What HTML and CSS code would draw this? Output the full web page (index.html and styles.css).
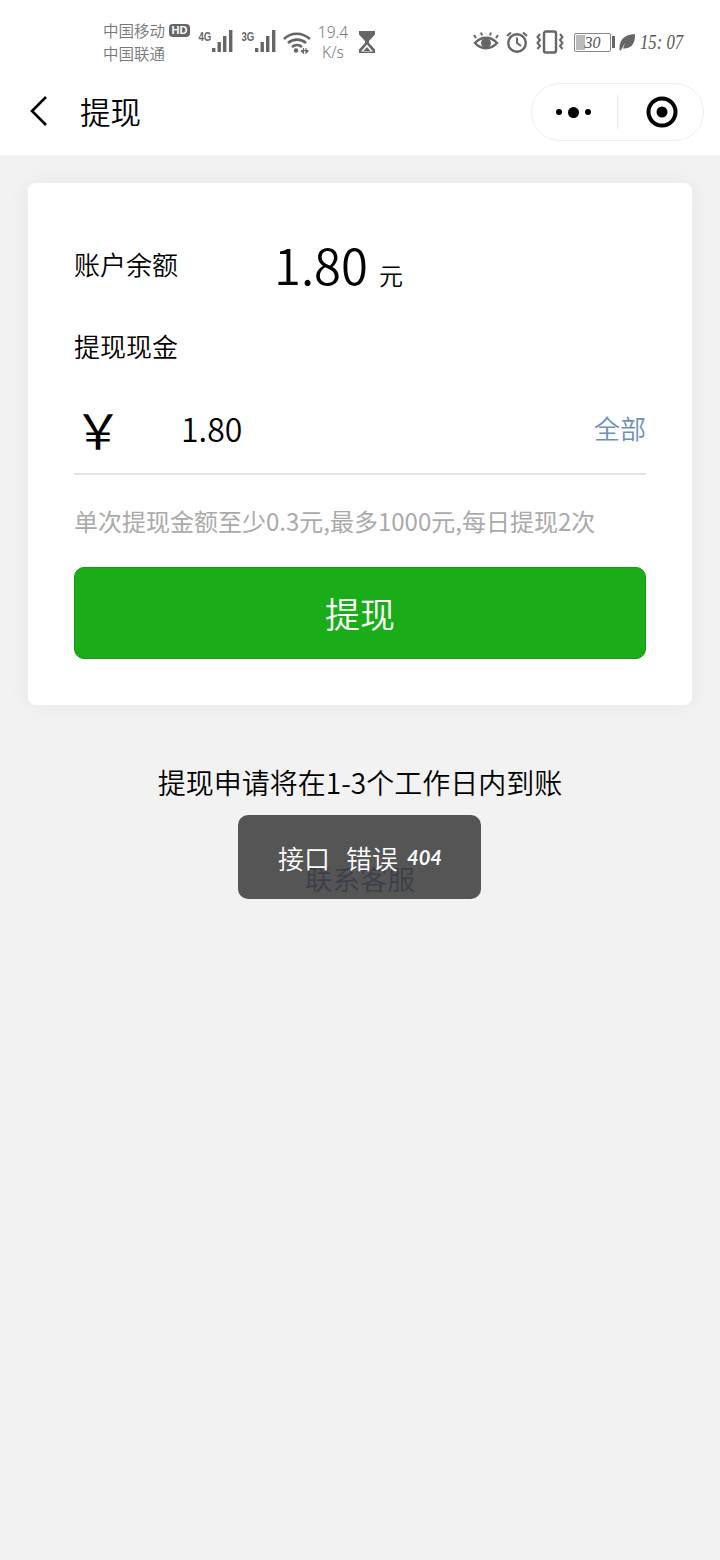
FILE: index.html
```html
<!DOCTYPE html>
<html lang="zh-CN">
<head>
<meta charset="utf-8">
<title>提现</title>
<link rel="stylesheet" href="styles.css">
</head>
<body>
<header class="top">
  <div class="status">
    <div class="carriers">
      <div class="carrier-line"><span>中国移动</span><span class="hd">HD</span></div>
      <div class="carrier-line"><span>中国联通</span></div>
    </div>
    <div class="signal">
      <span class="net">4G</span>
      <svg class="bars" viewBox="0 0 24 24" width="24" height="24"><rect x="1" y="18" width="3.400" height="4"/><rect x="6.500" y="12" width="3.400" height="10"/><rect x="12" y="6" width="3.400" height="16"/><rect x="18" y="0" width="3.400" height="22"/></svg>
    </div>
    <div class="signal">
      <span class="net">3G</span>
      <svg class="bars" viewBox="0 0 24 24" width="24" height="24"><rect x="1" y="18" width="3.400" height="4"/><rect x="6.500" y="12" width="3.400" height="10"/><rect x="12" y="6" width="3.400" height="16"/><rect x="18" y="0" width="3.400" height="22"/></svg>
    </div>
    <svg class="wifi" viewBox="0 0 30 24" width="30" height="24"><path d="M2 9C9 2 20 2 28 9M6 13c5-4.500 13-4.500 18 0M10 17c3-2.500 7-2.500 10 0" fill="none" stroke="#666" stroke-width="2.600"/><circle cx="14" cy="20.500" r="2.200" fill="#666"/><path d="M19 20.500h7M21.500 18v5l-2.500-2.500M24 18v5l2.500-2.500" fill="none" stroke="#666" stroke-width="1.200"/></svg>
    <div class="speed"><span>19.4</span><span>K/s</span></div>
    <svg class="glass" viewBox="0 0 20 24" width="20" height="24"><path d="M2 1h16v3.500l-6 6.500v2l6 6.500v3.500H2v-3.500l6-6.500v-2L2 4.500z" fill="#666"/><path d="M10 14.500l6 7H4z" fill="#fff"/><path d="M10 17l3.500 4h-7z" fill="#666"/></svg>
    <div class="status-right">
      <svg class="ico-eye" viewBox="0 0 26 24" width="26" height="24"><path d="M2 13c6-7 16-7 22 0-6 7-16 7-22 0z" fill="none" stroke="#666" stroke-width="2.400"/><circle cx="13" cy="13" r="5" fill="#666"/><path d="M3 8L1 5M9 5.500L8 2.500M17 5.500l1-3M23 8l2-3" stroke="#666" stroke-width="2" fill="none"/></svg>
      <svg class="ico-alarm" viewBox="0 0 24 24" width="24" height="24"><circle cx="12" cy="13" r="8.800" fill="none" stroke="#666" stroke-width="2.400"/><path d="M12 7.500V13l4 3M2 6l4-3.500M22 6l-4-3.500" fill="none" stroke="#666" stroke-width="2"/></svg>
      <svg class="ico-vib" viewBox="0 0 28 24" width="28" height="24"><rect x="8" y="1.500" width="12" height="21" rx="2" fill="none" stroke="#666" stroke-width="2.400"/><path d="M4 4l-2.500 3L4 10 1.500 13 4 16l-2.500 3M24 4l2.500 3L24 10l2.500 3L24 16l2.500 3" fill="none" stroke="#666" stroke-width="2"/></svg>
      <div class="battery-wrap">
        <div class="battery"><span class="battery-fill"></span><span class="battery-num">30</span></div>
        <span class="battery-cap"></span>
      </div>
      <svg class="ico-leaf" viewBox="0 0 18 20" width="18" height="20"><path d="M1.500 18C1 8 6 2.500 17 2c.5 10-4 15-12 14.500L7 11 2.800 18.500z" fill="#666"/></svg>
      <span class="clock">15: 07</span>
    </div>
  </div>
  <nav class="nav">
    <svg class="back" viewBox="0 0 20 32" width="20" height="32"><path d="M17 2L3 16l14 14" fill="none" stroke="#000" stroke-width="2.600"/></svg>
    <h1 class="title">提现</h1>
    <div class="capsule">
      <div class="dots"><i></i><i class="big"></i><i></i></div>
      <span class="sep"></span>
      <svg viewBox="0 0 32 32" width="32" height="32"><circle cx="16" cy="16" r="13.500" fill="none" stroke="#000" stroke-width="4"/><circle cx="16" cy="16" r="5.500" fill="#000"/></svg>
    </div>
  </nav>
</header>

<main class="page">
  <section class="card">
    <div class="balance">
      <span class="label">账户余额</span>
      <div class="money">
        <span class="amount">1.80</span>
        <span class="unit">元</span>
      </div>
    </div>
    <div class="label cash-label">提现现金</div>
    <div class="input-row">
      <span class="yen">￥</span>
      <span class="value">1.80</span>
      <span class="all">全部</span>
    </div>
    <p class="hint">单次提现金额至少0.3元,最多1000元,每日提现2次</p>
    <button class="submit" type="button">提现</button>
  </section>
  <p class="note">提现申请将在1-3个工作日内到账</p>
  <a class="service">联系客服</a>
</main>

<div class="toast"><span>接口</span><span>错误</span><em>404</em></div>
</body>
</html>
```

FILE: styles.css
```css
* { box-sizing: border-box; }
html, body { margin: 0; padding: 0; }
body {
  width: 720px;
  height: 1560px;
  overflow: hidden;
  position: relative;
  background: #f2f2f2;
  color: #000;
  font-family: "Noto Sans CJK SC", "Noto Sans", sans-serif;
  font-weight: 350;
}
.top { background: #fff; height: 155px; }
.status {
  height: 71px;
  padding: 13px 37px 0 103px;
  display: flex;
  align-items: center;
  color: #777;
}
.carriers { width: 94px; font-size: 15.500px; line-height: 23px; }
.carrier-line { display: flex; align-items: center; gap: 4px; height: 23px; }
.hd {
  background: #666;
  color: #fff;
  font-family: "Liberation Sans", sans-serif;
  font-size: 11px;
  font-weight: 700;
  line-height: 13px;
  height: 13px;
  width: 21px;
  text-align: center;
  border-radius: 4px;
}
.signal { display: flex; align-items: flex-start; width: 43px; }
.net {
  font-family: "Liberation Sans", sans-serif;
  font-size: 12px;
  font-weight: 700;
  color: #666;
  width: 15px;
  transform: scaleX(.8);
  line-height: 14px;
}
.bars { fill: #666; display: block; flex: none; margin-left: -1px; }
.wifi { margin-left: -1px; flex: none; }
.speed {
  width: 44px;
  display: flex;
  flex-direction: column;
  align-items: center;
  font-size: 15.500px;
  font-weight: 300;
  line-height: 20px;
  font-family: "Noto Sans", sans-serif;
  margin-left: -1px;
}
.glass { margin-left: 2px; flex: none; }
.status-right { margin-left: auto; display: flex; align-items: center; }
.ico-alarm { margin-left: 6px; }
.ico-vib { margin-left: 7px; }
.battery-wrap { display: flex; align-items: center; gap: 1px; margin-left: 10px; }
.battery {
  width: 37px;
  height: 19px;
  border: 1px solid #888;
  border-radius: 2px;
  position: relative;
  display: flex;
  align-items: center;
  justify-content: center;
}
.battery-fill { position: absolute; left: 1px; top: 1px; bottom: 1px; width: 9px; background: #bbb; }
.battery-num {
  position: relative;
  font-family: "Liberation Serif", serif;
  font-style: italic;
  font-size: 16px;
  line-height: 17px;
  color: #555;
}
.battery-cap { width: 3px; height: 12px; background: #666; }
.ico-leaf { margin-left: 3px; }
.clock {
  width: 43px;
  margin-left: 4px;
  font-family: "Liberation Serif", serif;
  font-style: italic;
  font-size: 22px;
  color: #555;
  white-space: nowrap;
  transform: scaleX(.76);
  transform-origin: left center;
}
.nav {
  height: 84px;
  display: flex;
  align-items: center;
  padding: 0 16px 4px 29px;
}
.back { flex: none; }
.title { margin: 0 0 0 31px; font-size: 30.500px; font-weight: 350; line-height: 40px; }
.capsule {
  margin-left: auto;
  margin-top: 2px;
  width: 173px;
  height: 58px;
  border: 1px solid #eee;
  border-radius: 29px;
  display: flex;
  align-items: center;
  padding-left: 24px;
}
.dots { display: flex; align-items: center; gap: 6px; width: 36px; }
.dots i { display: block; width: 6px; height: 6px; border-radius: 50%; background: #000; flex: none; }
.dots i.big { width: 11px; height: 11px; }
.sep { width: 1px; height: 34px; background: #e8e8e8; margin-left: 25px; }
.capsule svg { margin-left: 28px; flex: none; }

.page { padding: 28px 28px 0; display: flex; flex-direction: column; align-items: center; }
.card {
  width: 664px;
  height: 522px;
  background: #fff;
  border-radius: 8px;
  box-shadow: 0 0 24px rgba(0, 0, 0, .05);
  padding: 51px 46px 0;
}
.balance { display: flex; align-items: center; height: 60px; }
.label { font-size: 26px; line-height: 60px; }
.money { display: flex; align-items: baseline; margin: 0 0 0 96px; }
.amount { font-size: 49px; line-height: 60px; }
.unit { font-size: 24px; margin-left: 11px; }
.cash-label { margin-top: 32px; line-height: 40px; height: 40px; }
.input-row {
  height: 109px;
  padding-top: 16px;
  display: flex;
  align-items: center;
  border-bottom: 2px solid #e2e2e2;
}
.yen { width: 107px; font-size: 48px; font-weight: 400; line-height: 60px; }
.value { font-size: 32px; line-height: 60px; }
.all { margin-left: auto; font-size: 26px; color: #6f8fb8; }
.hint { margin: 28px 0 0; font-size: 24px; font-weight: 400; line-height: 36px; color: #aaa; white-space: nowrap; }
.submit {
  display: block;
  width: 100%;
  height: 92px;
  margin-top: 28px;
  border: 1px solid #179b16;
  border-radius: 10px;
  background: #1aad19;
  color: #fff;
  font: inherit;
  font-size: 35px;
  padding: 0 0 2px;
}
.note { margin: 57px 0 0; font-size: 28px; line-height: 40px; }
.service { margin-top: 56px; font-size: 27.500px; line-height: 40px; color: #506aa5; }
.toast {
  position: absolute;
  left: 238px;
  top: 815px;
  width: 243px;
  height: 84px;
  border-radius: 10px;
  background: rgba(55, 55, 55, .84);
  color: #fff;
  font-size: 26px;
  display: flex;
  align-items: center;
  padding-left: 40px;
}
.toast span:nth-child(2) { margin-left: 16px; }
.toast em {
  margin-left: 9px;
  font-family: "Lato", sans-serif;
  font-weight: 700;
  font-size: 20px;
}
```
